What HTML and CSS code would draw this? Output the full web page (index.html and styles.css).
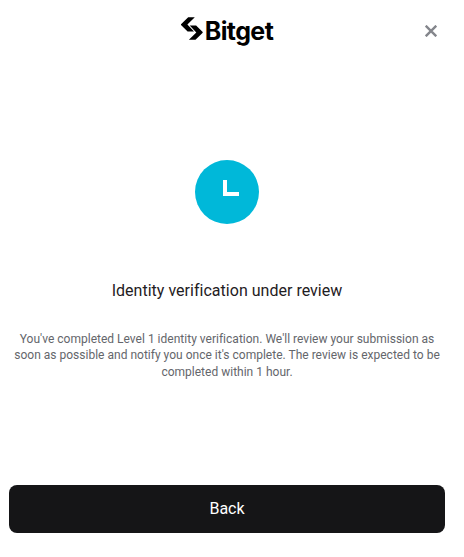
FILE: index.html
```html
<!doctype html>
<html lang="en">
<head>
    <meta charset="UTF-8">
    <meta name="viewport" content="width=device-width, initial-scale=1.0">
    <title>Identity verification</title>
    <link rel="stylesheet" href="styles.css">
</head>
<body>
    <div class="modal">
        <div class="header">
            <div class="logo">
                <svg class="logo-mark" width="22" height="24" viewBox="0 0 22 24">
                    <path d="M7.2 0.3H13.8L6.4 7.6L13 14.6H6.6L0 8V7.2Z"/>
                    <path d="M8.7 8.4H15.1L21.7 15V15.8L14.5 22.8H7.9L15.3 15.4Z"/>
                </svg>
                <span class="logo-text">Bitget</span>
            </div>
            <button class="close-button" aria-label="Close">
                <svg width="12" height="12" viewBox="0 0 12 12">
                    <path d="M0.7 0.7L11.3 11.3M11.3 0.7L0.7 11.3"/>
                </svg>
            </button>
        </div>
        <svg class="status-icon" width="64" height="64" viewBox="0 0 64 64">
            <circle cx="32" cy="32" r="32" fill="#00b8d9"/>
            <path d="M28 20H32V32H44V36H28Z" fill="#fff"/>
        </svg>
        <h1 class="title">Identity verification under review</h1>
        <p class="description">You've completed Level 1 identity verification. We'll review your submission as soon as possible and notify you once it's complete. The review is expected to be completed within 1 hour.</p>
        <button class="back-button">Back</button>
    </div>
</body>
</html>
```
FILE: styles.css
```css
body {
    margin: 0;
    background-color: #fff;
    font-family: Roboto, "Liberation Sans", sans-serif;
}
.modal {
    display: flex;
    flex-direction: column;
    align-items: center;
    box-sizing: border-box;
    width: 454px;
    height: 557px;
    padding: 0 9px 24px;
}
.header {
    display: grid;
    grid-template-columns: 1fr auto 1fr;
    align-items: center;
    width: 100%;
    height: 62px;
}
.logo {
    grid-column: 2;
    display: flex;
    align-items: flex-start;
    gap: 2px;
    height: 28px;
    color: #000;
}
.logo-mark {
    fill: currentColor;
}
.logo-text {
    font-family: Inter, "Liberation Sans", sans-serif;
    font-size: 25px;
    font-weight: 700;
    line-height: 29px;
    letter-spacing: -0.6px;
}
.close-button {
    display: flex;
    justify-self: end;
    margin-right: 8px;
    padding: 0;
    border: none;
    background: none;
    cursor: pointer;
}
.close-button path {
    stroke: #84868c;
    stroke-width: 2.4;
}
.status-icon {
    margin-top: 98px;
}
.title {
    margin: 55px 0 0;
    color: #1f2023;
    font-size: 16px;
    font-weight: 400;
    line-height: 24px;
    letter-spacing: 0.02px;
}
.description {
    margin: 28px 0 0;
    color: #64666b;
    font-size: 12px;
    line-height: 16.4px;
    letter-spacing: 0.01px;
    text-align: center;
}
.back-button {
    width: 436px;
    height: 48px;
    margin-top: auto;
    padding: 0 6px 2px;
    border: none;
    border-radius: 8px;
    background-color: #151517;
    color: #fff;
    font-family: inherit;
    font-size: 16px;
    cursor: pointer;
}
```
